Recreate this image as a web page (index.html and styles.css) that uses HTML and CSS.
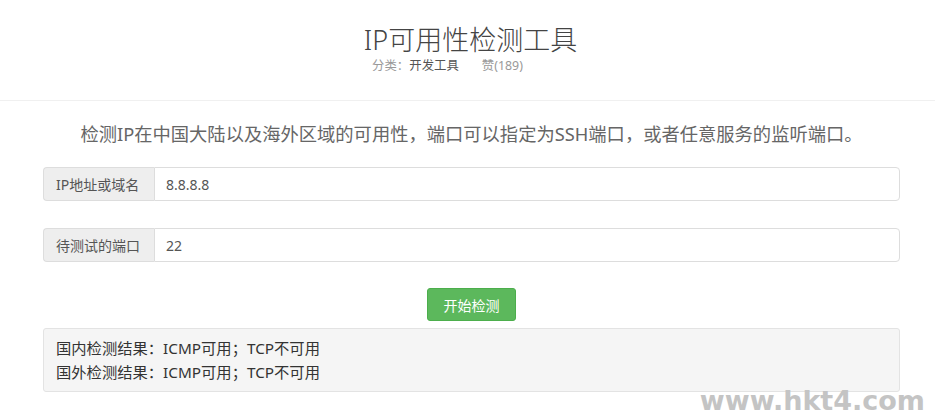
FILE: index.html
```html
<!DOCTYPE html>
<html lang="zh-CN">
<head>
<meta charset="utf-8">
<title>IP可用性检测工具</title>
<link rel="stylesheet" href="styles.css">
</head>
<body>
<header class="head">
  <h1 class="title">IP可用性检测工具</h1>
  <div class="meta"><span class="cat">分类：<span class="cat-name">开发工具</span></span><span class="likes">赞(189)</span></div>
</header>
<main class="main">
  <p class="desc">检测IP在中国大陆以及海外区域的可用性，端口可以指定为SSH端口，或者任意服务的监听端口。</p>
  <div class="group">
    <span class="addon">IP地址或域名</span>
    <input class="field" type="text" value="8.8.8.8">
  </div>
  <div class="group group-port">
    <span class="addon">待测试的端口</span>
    <input class="field" type="text" value="22">
  </div>
  <div class="actions"><button class="btn" type="button">开始检测</button></div>
  <div class="well">
    <div class="line">国内检测结果：ICMP可用；TCP不可用</div>
    <div class="line">国外检测结果：ICMP可用；TCP不可用</div>
  </div>
</main>
<div class="watermark">www.hkt4.com</div>
</body>
</html>
```
FILE: styles.css
```css
html, body {
  margin: 0;
  padding: 0;
  background: #fff;
}
body {
  font-family: "Noto Sans", "Noto Sans CJK SC", sans-serif;
  color: #333;
  width: 935px;
  height: 417px;
  overflow: hidden;
  position: relative;
}
.head {
  text-align: center;
  padding-top: 21px;
  height: 79px;
  border-bottom: 1px solid #f0f0f0;
  box-sizing: content-box;
}
.title {
  margin: 0;
  font-size: 27px;
  font-weight: 300;
  line-height: 38px;
  color: #444;
  padding-left: 6px;
}
.meta {
  font-size: 12.4px;
  line-height: 16px;
  color: #999;
  margin-top: -1px;
  padding-right: 40px;
}
.cat-name { color: #555; }
.likes { margin-left: 23px; }
.main {
  margin: 0 35px 0 43px;
}
.desc {
  margin: 19px 0 0;
  text-align: center;
  font-size: 18.3px;
  line-height: 28px;
  color: #666;
}
.group {
  display: flex;
  height: 34px;
  margin-top: 19px;
}
.group-port { margin-top: 27px; }
.addon {
  display: flex;
  align-items: center;
  width: 111px;
  padding-left: 12px;
  box-sizing: border-box;
  background: #eee;
  border: 1px solid #ddd;
  border-right: 0;
  border-radius: 4px 0 0 4px;
  font-size: 14px;
  color: #555;
}
.field {
  flex: 1;
  border: 1px solid #ddd;
  border-radius: 0 4px 4px 0;
  padding: 0 11px;
  font-family: inherit;
  font-size: 14px;
  color: #555;
  background: #fff;
  outline: none;
  margin: 0;
}
.actions {
  display: flex;
  justify-content: center;
  margin-top: 26px;
}
.btn {
  width: 89px;
  height: 33px;
  background: #5cb85c;
  border: 1px solid #4cae4c;
  border-radius: 3px;
  color: #fff;
  font-family: inherit;
  font-size: 14px;
  padding: 0;
}
.well {
  margin-top: 7px;
  background: #f5f5f5;
  border: 1px solid #e3e3e3;
  border-radius: 3px;
  padding: 7px 12px;
  font-size: 15.3px;
  line-height: 24px;
  color: #333;
}
.watermark {
  position: absolute;
  right: 10px;
  bottom: 1px;
  font-family: "DejaVu Sans", sans-serif;
  font-weight: bold;
  font-size: 27px;
  line-height: 30px;
  color: #c4c4c4;
}
```
